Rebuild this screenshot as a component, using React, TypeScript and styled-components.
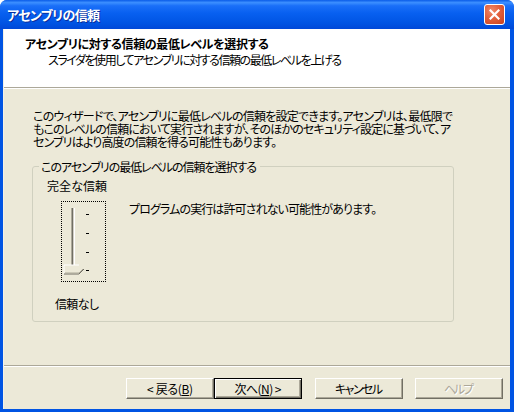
import React, { useLayoutEffect, useRef, useState } from 'react';
import styled, { createGlobalStyle } from 'styled-components';

const GlobalStyle = createGlobalStyle`
  html, body {
    margin: 0;
    padding: 0;
    background: #ffffff;
  }
  body {
    font-family: "Noto Sans CJK JP", "Liberation Sans", sans-serif;
    font-size: 12px;
    font-feature-settings: "palt";
    color: #000000;
  }
`

const Window = styled.div`
  width: 514px;
  height: 412px;
  display: flex;
  flex-direction: column;
  background: #0054e3;
  border-radius: 7px 7px 0 0;
  overflow: hidden;
`
const TitleBar = styled.div`
  height: 29px;
  flex: none;
  display: flex;
  align-items: center;
  justify-content: space-between;
  padding: 0 7px 0 7px;
  box-sizing: border-box;
  background: linear-gradient(to bottom, #0a5ce8 0%, #3c8fff 9%, #1a6ff8 20%, #0860f0 45%, #0054e3 80%, #0048d8 100%);
`
const Title = styled.span`
  color: #ffffff;
  font-weight: bold;
  font-size: 13px;
  text-shadow: 1px 1px 0 #0a2e9c;
`
const CloseButton = styled.div`
  width: 21px;
  height: 21px;
  box-sizing: border-box;
  border: 1px solid #ffffff;
  border-radius: 3px;
  background: radial-gradient(circle at 35% 30%, #f08a6a 0%, #e2603c 45%, #c7401d 100%);
  display: flex;
  align-items: center;
  justify-content: center;
  margin-right: 2px;
`
const Frame = styled.div`
  flex: 1;
  display: flex;
  flex-direction: column;
  margin: 0 4px 3px 3px;
  background: #ece9d8;
  border-left: 1px solid #f3f1e6;
`
const Header = styled.div`
  height: 58px;
  flex: none;
  background: #ffffff;
  padding: 7px 0 0 21px;
  box-sizing: border-box;
`
const HeaderTitle = styled.div`
  font-weight: bold;
  line-height: 16px;
`
const HeaderSub = styled.div`
  padding-left: 23px;
  line-height: 16px;
`
const Rule = styled.div`
  height: 1px;
  flex: none;
  background: #aca899;
  border-bottom: 1px solid #ffffff;
`
const Body = styled.div`
  flex: 1;
  padding: 20px 0 0 29px;
`
const Paragraph = styled.div`
  display: flex;
  flex-direction: column;
  align-items: flex-start;
  line-height: 13px;
`
const GroupBox = styled.fieldset`
  margin: 12px 0 0 -1px;
  width: 422px;
  height: 162px;
  box-sizing: border-box;
  border: 1px solid #d0d0bf;
  border-radius: 3px;
  padding: 0 0 0 14px;
  display: flex;
  gap: 22px;
`
const Legend = styled.legend`
  padding: 0 3px 0 2px;
  margin-left: -8px;
  line-height: 13px;
`
const LevelColumn = styled.div`
  display: flex;
  flex-direction: column;
  align-items: flex-start;
  padding-top: 6px;
`
const LevelLabel = styled.div<{ $indent: number }>`
  margin-left: ${p => p.$indent}px;
  line-height: 14px;
`
const FocusBox = styled.div`
  margin: 8px 0 15px 14px;
  width: 45px;
  height: 81px;
  box-sizing: border-box;
  border: 1px dotted #000000;
`
const Description = styled.div`
  padding-top: 29px;
  line-height: 14px;
`
const Footer = styled.div`
  height: 42px;
  flex: none;
  display: flex;
  justify-content: flex-end;
  align-items: flex-start;
  padding: 11px 7px 0 0;
  box-sizing: border-box;
`
const Button = styled.button<{ $default?: boolean; $gap?: number }>`
  width: 88px;
  height: 21px;
  margin-left: ${p => p.$gap || 0}px;
  padding: 0;
  background: #ece9d8;
  font-family: inherit;
  font-size: 12px;
  font-feature-settings: "palt";
  color: ${p => (p.disabled ? '#aca899' : '#000000')};
  text-shadow: ${p => (p.disabled ? '1px 1px 0 #ffffff' : 'none')};
  border: 1px solid;
  border-color: ${p => (p.$default ? '#000000' : '#ffffff #716f64 #716f64 #ffffff')};
  box-shadow: ${p => (p.$default
    ? 'inset 1px 1px 0 #ffffff, inset -1px -1px 0 #716f64, inset -2px -2px 0 #aca899'
    : 'inset -1px -1px 0 #aca899')};
  display: flex;
  align-items: center;
  justify-content: center;
  line-height: 1;
`
const Mnemonic = styled.span`
  text-decoration: underline;
`
const FitSpan = styled.span`
  display: inline-block;
  white-space: nowrap;
`

// stretches or squeezes a text run to the width it has in the screenshot
function Fit({ w, children }: { w: number; children: React.ReactNode }) {
  const ref = useRef<HTMLSpanElement>(null);
  const [ls, setLs] = useState(0);
  useLayoutEffect(() => {
    const measure = () => {
      const el = ref.current;
      if (!el) return;
      const prevLs = el.style.letterSpacing;
      const prevMr = el.style.marginRight;
      el.style.letterSpacing = '0px';
      el.style.marginRight = '0px';
      const natural = el.getBoundingClientRect().width;
      const n = (el.textContent || '').length;
      el.style.letterSpacing = prevLs;
      el.style.marginRight = prevMr;
      if (n > 1) setLs((w - natural) / (n - 1));
    };
    measure();
    document.fonts.ready.then(measure);
  }, [w]);
  return (
    <FitSpan ref={ref} style={{ letterSpacing: `${ls}px`, marginRight: `${-ls}px` }}>
      {children}
    </FitSpan>
  );
}

function Slider() {
  const ticks = [12, 31, 50, 68];
  return (
    <svg width="43" height="79" viewBox="0 0 43 79">
      <rect x="9" y="6" width="1" height="62" fill="#aca899" />
      <rect x="10" y="6" width="1" height="62" fill="#716f64" />
      <rect x="11" y="6" width="1" height="62" fill="#d4d0c8" />
      <rect x="12" y="6" width="1" height="62" fill="#ffffff" />
      {ticks.map(t => (
        <rect key={t} x="24" y={t} width="3" height="1" fill="#000000" />
      ))}
      <polygon points="2,63 17,63 22,67.5 17,72 2,72" fill="#ece9d8" />
      <polyline points="2,72 2,63 17,63" fill="none" stroke="#ffffff" strokeWidth="1" />
      <polyline points="2,72 17,72 22,67" fill="none" stroke="#716f64" strokeWidth="1" />
      <polyline points="3,71 17,71 21,67" fill="none" stroke="#aca899" strokeWidth="1" />
    </svg>
  );
}

export default function App() {
  return (
    <>
      <GlobalStyle />
      <Window>
        <TitleBar>
          <Title><Fit w={93}>アセンブリの信頼</Fit></Title>
          <CloseButton>
            <svg width="11" height="11" viewBox="0 0 11 11">
              <path d="M1.5 1.5 L9.5 9.5 M9.5 1.5 L1.5 9.5" stroke="#ffffff" strokeWidth="2.2" strokeLinecap="square" />
            </svg>
          </CloseButton>
        </TitleBar>
        <Frame>
          <Header>
            <HeaderTitle><Fit w={244}>アセンブリに対する信頼の最低レベルを選択する</Fit></HeaderTitle>
            <HeaderSub><Fit w={294}>スライダを使用してアセンブリに対する信頼の最低レベルを上げる</Fit></HeaderSub>
          </Header>
          <Rule />
          <Body>
            <Paragraph>
              <Fit w={420}>このウィザードで、アセンブリに最低レベルの信頼を設定できます。アセンブリは、最低限で</Fit>
              <Fit w={418}>もこのレベルの信頼において実行されますが、そのほかのセキュリティ設定に基づいて、ア</Fit>
              <Fit w={244}>センブリはより高度の信頼を得る可能性もあります。</Fit>
            </Paragraph>
            <GroupBox>
              <Legend><Fit w={216}>このアセンブリの最低レベルの信頼を選択する</Fit></Legend>
              <LevelColumn>
                <LevelLabel $indent={0}><Fit w={60}>完全な信頼</Fit></LevelLabel>
                <FocusBox>
                  <Slider />
                </FocusBox>
                <LevelLabel $indent={8}><Fit w={44}>信頼なし</Fit></LevelLabel>
              </LevelColumn>
              <Description><Fit w={248}>プログラムの実行は許可されない可能性があります。</Fit></Description>
            </GroupBox>
          </Body>
          <Rule />
          <Footer>
            <Button><Fit w={46}>&lt; 戻る(<Mnemonic>B</Mnemonic>)</Fit></Button>
            <Button $default><Fit w={47}>次へ(<Mnemonic>N</Mnemonic>) &gt;</Fit></Button>
            <Button $gap={13}><Fit w={48}>キャンセル</Fit></Button>
            <Button $gap={12} disabled><Fit w={30}>ヘルプ</Fit></Button>
          </Footer>
        </Frame>
      </Window>
    </>
  );
}
